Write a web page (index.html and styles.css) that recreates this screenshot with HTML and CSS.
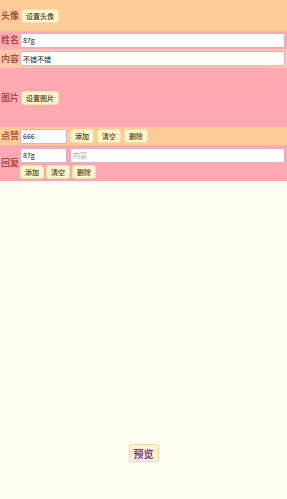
FILE: index.html
```html
<!DOCTYPE html>
<html>
  <head>
    <title>编辑</title>
    <link rel="stylesheet" href="styles.css">
  </head>
  <body>
    <div class="form">
      <div class="row row-avatar orange">
        <span class="label">头像</span>
        <button class="btn">设置头像</button>
      </div>
      <div class="row row-line pink">
        <span class="label">姓名</span>
        <input class="field wide" value="87g">
      </div>
      <div class="row row-line peach">
        <span class="label">内容</span>
        <input class="field wide" value="不错不错">
      </div>
      <div class="row row-image pink">
        <span class="label">图片</span>
        <button class="btn">设置图片</button>
      </div>
      <div class="row row-line orange">
        <span class="label">点赞</span>
        <input class="field short" value="666">
        <button class="btn">添加</button>
        <button class="btn">清空</button>
        <button class="btn">删除</button>
      </div>
      <div class="row row-reply pink">
        <span class="label">回复</span>
        <div class="reply">
          <div class="reply-inputs">
            <input class="field short" value="87g">
            <input class="field wide" placeholder="内容">
          </div>
          <div class="reply-btns">
            <button class="btn">添加</button>
            <button class="btn">清空</button>
            <button class="btn">删除</button>
          </div>
        </div>
      </div>
    </div>
    <div class="footer">
      <button class="btn preview">预览</button>
    </div>
  </body>
</html>
```

FILE: styles.css
```css
/* edit page */
html, body {
  margin: 0;
  padding: 0;
  height: 100%;
}
body {
  background-color: #fffef3;
  font-family: "Noto Sans CJK SC", "Noto Sans", sans-serif;
  display: flex;
  flex-direction: column;
}
.row {
  display: flex;
  align-items: center;
  padding: 0 2px 0 1px;
  box-sizing: border-box;
}
.orange {
  background-color: #ffcc98;
}
.pink {
  background-color: #ffaab2;
}
.peach {
  background-color: #fdc8a6;
}
.row-avatar {
  height: 31px;
}
.row-line {
  height: 18px;
}
.row-line.peach {
  height: 19px;
}
.row-image {
  height: 59px;
}
.row-reply {
  height: 36px;
}
.label {
  width: 19px;
  flex-shrink: 0;
  font-size: 9px;
  font-weight: 500;
  line-height: 12px;
  color: #9c3b34;
  white-space: nowrap;
}
.btn {
  font-family: inherit;
  font-size: 7px;
  font-weight: 500;
  line-height: 10px;
  color: #4a3f20;
  background-color: #fff6cc;
  border: 1px solid #f6dfa8;
  border-radius: 3px;
  padding: 1px 4px;
  margin: 0 3px 0 0;
  height: 14px;
  cursor: pointer;
}
.row-avatar .btn,
.row-image .btn {
  margin-left: 1px;
}
.field {
  font-family: inherit;
  font-size: 7px;
  color: #222;
  background: #fff;
  border: 1px solid #dbb1c9;
  border-radius: 2px;
  height: 15px;
  padding: 0 2px;
  box-sizing: border-box;
  outline: none;
}
.field::placeholder {
  color: #aaa;
}
.field.wide {
  flex: 1;
  min-width: 0;
}
.field.short {
  width: 47px;
  margin-right: 3px;
}
.reply {
  flex: 1;
  display: flex;
  flex-direction: column;
  gap: 2px;
}
.reply-inputs {
  display: flex;
}
.reply-btns {
  display: flex;
}
.reply-btns .btn {
  margin: 0 2px 0 0;
}
.footer {
  flex: 1;
  display: flex;
  align-items: flex-end;
  justify-content: center;
  padding-bottom: 37px;
}
.preview {
  font-size: 10px;
  font-weight: 600;
  line-height: 13px;
  color: #7a3b9a;
  height: 18px;
  padding: 1px 4px;
  margin: 0;
  border-color: #f4d7a9;
}
```
